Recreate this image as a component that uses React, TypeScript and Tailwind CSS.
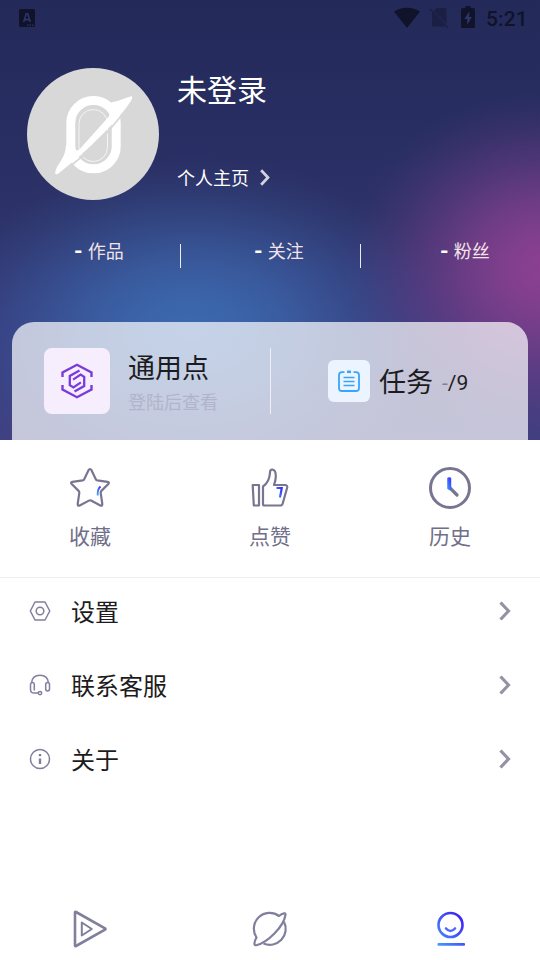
import type { ReactNode } from 'react'

const Chevron = ({ className = '' }: { className?: string }) => (
  <svg viewBox="0 0 12 20" fill="none" className={className}>
    <path d="M1.500 1.500 9.500 10l-8 8.500" stroke="currentColor" strokeWidth="3.200" />
  </svg>
)

const StatusBar = () => (
  <div className="flex h-9 items-center justify-between pr-[13px] pl-[19px] text-[#101329]">
    <svg width="16" height="18" viewBox="0 0 16 18">
      <rect width="16" height="18" rx="1.5" fill="currentColor" />
      <path
        d="M4.6 13 7.3 4.8h1.4l2.7 8.2M5.8 10.6h4.4"
        fill="none"
        stroke="#2c3468"
        strokeWidth="1.6"
      />
      <path d="M8 16.2h7" stroke="#2c3468" strokeWidth="1.2" strokeDasharray="1.6 .9" />
    </svg>
    <div className="flex items-center">
      <svg width="26" height="22" viewBox="0 0 26 22" fill="currentColor">
        <path d="M0 4.600C3.600 1.900 8 .7 13 .7s9.400 1.200 13 3.900L13 21Z" />
      </svg>
      <svg width="20" height="22" viewBox="0 0 20 22" className="ml-[9px] text-[#1b1f44]">
        <path d="M7.500 1H16q1.500 0 1.500 1.500V17L5 4Z" fill="currentColor" />
        <path d="M3 5 16 19.500H4.500Q3 19.500 3 18Z" fill="currentColor" />
        <path d="m.8 1.800 18 19" stroke="currentColor" strokeWidth="1.500" />
      </svg>
      <svg width="14" height="22" viewBox="0 0 14 22" className="mb-0.5 ml-3">
        <path
          d="M4.500 0h5v2h3Q14 2 14 3.500v17q0 1.500-1.500 1.500h-11Q0 22 0 20.500v-17Q0 2 1.500 2h3Z"
          fill="currentColor"
        />
        <path d="M8.300 5.500 3.300 13h2.900v6l4.700-8H8.300Z" fill="#2c3468" />
      </svg>
      <span className="ml-[11px] w-[41px] pt-0.5 font-[Roboto] text-[21px] leading-none font-medium tracking-[0.1px]">
        5:21
      </span>
    </div>
  </div>
)

const Avatar = () => (
  <div className="h-33 w-33 shrink-0 overflow-hidden rounded-full bg-[#d8d8d8]">
    <svg viewBox="0 0 132 132" fill="none">
      <rect x="52" y="41.500" width="28.500" height="52" rx="14.200" stroke="#f4f4f4" strokeWidth="1" />
      <rect x="43.800" y="32.500" width="45.400" height="68.300" rx="22.500" stroke="#fff" strokeWidth="9" />
      <path
        d="M104.500 28.200c-5.500 1-12 4.800-19.500 6.100l-6 2c4 4 5.200 9 2 13.300L53 80.800c-2.300 2.500-4.700 2.200-4.800-.8L39 77c-.2 14-10 19-10.800 28 .3 1.600 2 1.300 3.200.5C57 86 84 59 99 40c3-4 6-8 6.200-10.500 0-1-.2-1.300-.7-1.300Z"
        fill="#fff"
      />
      {/* gap between the ring and the blade */}
      <path d="M96 45.500C81 65 63 83.500 44 97.500" stroke="#d8d8d8" strokeWidth="1.800" />
    </svg>
  </div>
)

const Stat = ({ label, className }: { label: string; className: string }) => (
  <div className={`flex h-6 items-center text-[18px] leading-6 text-[#f3e3e8] ${className}`}>
    <span className="mr-[5px] h-6 font-[Roboto] text-[22px] font-bold text-white">-</span>
    {label}
  </div>
)

const PointsIcon = () => (
  <div className="flex h-[66px] w-[66px] items-center justify-center rounded-lg bg-[#f6eefd]">
    <svg width="32" height="36" viewBox="0 0 32 36" fill="none" stroke="#7b3bdc" strokeWidth="2.400">
      <path d="M1.500 14V9.500L16 1.800l14.500 7.700V14M1.500 22v4.500L16 34.200l14.500-7.700V22" />
      <path d="M18.500 7.500 8.800 13v9.200l3.600 2.200 7.500-5" strokeWidth="2.300" />
      <path d="M13.500 28.500 23.200 23v-9.200l-3.600-2.200-7.500 5" strokeWidth="2.300" />
    </svg>
  </div>
)

const TaskIcon = () => (
  <div className="flex h-[42px] w-[42px] items-center justify-center rounded-md bg-[#ebf4ff]">
    <svg width="22" height="22" viewBox="0 0 22 22" fill="none" stroke="#38a5fb" strokeWidth="1.500">
      <path d="M6.500 2.200H4Q1 2.200 1 5.200v13q0 2.800 3 2.800h14q3 0 3-2.800v-13q0-3-3-3h-2.500" strokeWidth="1.800" />
      <path d="M9 1.800h4" strokeWidth="2.500" />
      <path d="M5.500 7.500h11M5.500 11.500h11M5.500 15.500h11" />
    </svg>
  </div>
)

const StarIcon = () => (
  <svg width="42" height="42" viewBox="0 0 42 42" fill="none">
    <path
      d="M19.500 3.200q1.500-2.400 3 0l4.300 9q.5 1 1.600 1.200l10.100 1.400q2.300.5.800 2.200l-6.900 6.900q-.9.900-.7 2l1.600 11q.2 2.500-2 1.500l-9.200-4.800q-1.100-.6-2.200 0l-9.200 4.800q-2.200 1-2-1.500l1.600-11q.2-1.100-.7-2l-6.900-6.900q-1.500-1.700.8-2.200l10.100-1.400q1.100-.2 1.600-1.200Z"
      stroke="#77758f"
      strokeWidth="2.200"
    />
    <path d="M31.500 19.500q-3.500 3-2.700 9" stroke="url(#accent)" strokeWidth="1.800" />
  </svg>
)

const LikeIcon = () => (
  <svg width="40" height="42" viewBox="0 0 40 42" fill="none" stroke="#77758f" strokeWidth="2.200">
    <path d="M2.700 18h6.300v20.500H3.800Z" strokeLinejoin="round" />
    <path
      d="M13 19.500q6.500-4.500 7-14 0-3 2.300-3 3.700.5 3.500 7 0 3.500-1.800 8.500h11.300q2.200.3 1.900 2.500l-4.500 16q-.5 2-2.500 2H14.500q-1.500 0-1.500-1.500Z"
      strokeLinejoin="round"
    />
    <path d="M26.500 21h5.200q-.6 4.500-1.800 9.500" stroke="url(#accent)" />
  </svg>
)

const HistoryIcon = () => (
  <svg width="42" height="42" viewBox="0 0 42 42" fill="none" strokeWidth="3">
    <circle cx="21" cy="21" r="19.500" stroke="#77758f" />
    <path d="m21 21 7 7" stroke="#77758f" strokeWidth="3.200" strokeLinecap="round" />
    <path d="M18.200 11.500q0-1.300 2-1.300t2 1.300v11l-2 .8-2-1.600Z" fill="url(#accent)" />
  </svg>
)

const SettingsIcon = () => (
  <>
    <path d="M5.500 1.500h10L20.300 10.500l-4.800 9h-10L.8 10.500Z" strokeLinejoin="round" />
    <circle cx="10.500" cy="10.500" r="3.800" />
  </>
)

const HeadsetIcon = () => (
  <>
    <path d="M2 8.500C2.500 3.500 6 .8 10.500.8S18.500 3.500 19 8.500" />
    <path d="M4.800 16V9.500Q4.600 8 3 8T1 9.800V15q0 3.600 4 3.600h3.500" />
    <rect x="16.200" y="8" width="3.800" height="8.500" rx="1.900" />
    <circle cx="10.500" cy="18.600" r="1.700" />
  </>
)

const InfoIcon = () => (
  <>
    <circle cx="10.500" cy="10.500" r="9.500" />
    <path d="M10.500 5.600v2.200M10.500 10v5.500" strokeWidth="2.400" />
  </>
)

const shortcuts = [
  { label: '收藏', icon: <StarIcon /> },
  { label: '点赞', icon: <LikeIcon /> },
  { label: '历史', icon: <HistoryIcon /> },
]

const MenuRow = ({ label, children }: { label: string; children: ReactNode }) => (
  <div className="flex h-[66px] items-center pr-[29px] pl-[29px]">
    <svg width="22" height="22" viewBox="-.5 -.5 22 22" fill="none" stroke="#817f9c" strokeWidth="1.500">
      {children}
    </svg>
    <span className="ml-5 flex-1 pt-[3px] text-[24px] leading-9 text-[#1c1c20]">{label}</span>
    <Chevron className="h-5 w-3 text-[#9492a6]" />
  </div>
)

const TabBar = () => (
  <div className="grid h-16 grid-cols-3 place-items-center pt-0.5">
    <svg width="36" height="38" viewBox="0 0 36 38" fill="none" stroke="#817f9c" strokeLinejoin="round">
      <path d="M3 2.500v33q0 1 1 .5l29-16.300q1-.7 0-1.400L4 2q-1-.5-1 .5Z" strokeWidth="2.600" />
      <path d="M9.800 12.500v13l10-6.500Z" strokeWidth="2" />
    </svg>
    <svg width="36" height="38" viewBox="0 0 36 38" fill="none" stroke="#817f9c" strokeWidth="2.200" strokeLinejoin="round">
      <path d="M27 6A15.800 15.800 0 0 0 4.500 27.500C3 30 2 32.500 2.600 34.600Q3 35.600 5 35C15 32.500 32 17 33.500 4.500Q33.500 3 32 3.300C30 3.700 28.500 4.700 27 6Z" />
      <path d="M32 11.800A15.800 15.800 0 0 1 11.500 33.400" />
    </svg>
    <svg width="30" height="36" viewBox="0 0 30 36" fill="none" className="ml-0.5">
      <circle cx="14.500" cy="14" r="12" stroke="url(#accent-line)" strokeWidth="2.600" />
      <path d="M10 17.500q4.500 5 9 0" stroke="#5267ff" strokeWidth="2.600" strokeLinecap="round" />
      <rect x="1.500" y="32" width="27.500" height="2.800" rx="1" fill="url(#accent-line)" />
    </svg>
  </div>
)

const Gradients = () => (
  <svg className="absolute h-0 w-0">
    <defs>
      <linearGradient id="accent" x1="1" y1="0" x2="0" y2="1">
        <stop stopColor="#3528ff" />
        <stop offset="1" stopColor="#42a0ff" />
      </linearGradient>
      <linearGradient id="accent-line" x1="0" y1="34" x2="28" y2="10" gradientUnits="userSpaceOnUse">
        <stop stopColor="#459eff" />
        <stop offset="1" stopColor="#4024f5" />
      </linearGradient>
    </defs>
  </svg>
)

export default function App() {
  return (
    <div className="flex h-[960px] w-[540px] flex-col overflow-hidden bg-white font-[Roboto,'Noto_Sans_CJK_SC',sans-serif]">
      <Gradients />
      <header className="flex h-[440px] flex-col bg-[radial-gradient(ellipse_200px_180px_at_545px_268px,#8c4090_0%,#8a4090e6_18%,#884090b8_36%,#8640906b_58%,#8640902e_77%,#8640900a_92%,#86409000_100%),radial-gradient(ellipse_270px_175px_at_190px_330px,#3c69af_0%,#3c69afe6_18%,#3c69afb3_38%,#3c69af66_60%,#3c69af2b_78%,#3c69af0a_92%,#3c69af00_100%),linear-gradient(#232a59_0%,#282e62_30%,#2d3268_50%,#363777_75%,#403f80_100%)]">
        <StatusBar />
        <div className="flex px-[27px] pt-8">
          <Avatar />
          <div className="ml-[18px] flex flex-col justify-between pb-[9px] text-white">
            <h1 className="pt-px text-[30px] leading-[44px]">未登录</h1>
            <div className="flex items-center text-[18px] leading-6">
              个人主页
              <Chevron className="mb-1 ml-2.5 h-[17px] w-3 text-[#d2d3df]" />
            </div>
          </div>
        </div>
        <div className="mt-10 grid grid-cols-3">
          <Stat label="作品" className="pl-[74px]" />
          <Stat label="关注" className="pl-[74px]" />
          <Stat label="粉丝" className="pl-[80px]" />
        </div>
        <div className="-mt-5 flex h-6">
          <i className="w-[181px] border-r border-white/90" />
          <i className="w-[180px] border-r border-white/90" />
        </div>
        <div className="mx-3 mt-auto flex h-[118px] rounded-t-[22px] bg-white/70 pt-[26px]">
          <div className="flex h-[66px] w-[259px] border-r border-[#f1efef] pl-8">
            <PointsIcon />
            <div className="ml-[18px]">
              <p className="pt-px text-[27px] leading-10 text-[#1c1c20]">通用点</p>
              <p className="text-[18px] leading-7 text-[#b3b4cb]">登陆后查看</p>
            </div>
          </div>
          <div className="flex h-[66px] items-center pl-[57px]">
            <TaskIcon />
            <span className="ml-[9px] pt-1 text-[27px] leading-10 text-[#1c1c20]">任务</span>
            <span className="ml-[9px] pt-[5px] text-[21px] text-[#1c1c20]">
              <span className="text-[#817f9c]">-</span>/9
            </span>
          </div>
        </div>
      </header>

      <section className="grid h-[138px] grid-cols-3 border-b border-[#eeeef1] pt-[27px]">
        {shortcuts.map(({ label, icon }) => (
          <div key={label} className="flex flex-col items-center">
            {icon}
            <span className="mt-3 text-[21px] leading-8 text-[#706e89]">{label}</span>
          </div>
        ))}
      </section>

      <nav className="flex flex-1 flex-col gap-2">
        <MenuRow label="设置">
          <SettingsIcon />
        </MenuRow>
        <MenuRow label="联系客服">
          <HeadsetIcon />
        </MenuRow>
        <MenuRow label="关于">
          <InfoIcon />
        </MenuRow>
      </nav>
      <TabBar />
    </div>
  )
}
